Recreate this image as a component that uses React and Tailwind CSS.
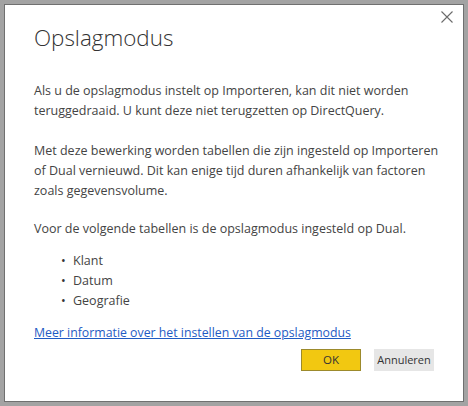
export default function App() {
  const body = { fontFamily: '"Open Sans", "Noto Sans", sans-serif' };

  return (
    <div className="w-[468px] h-[406px] bg-[#a3a3a3] p-[4px]">
      <div
        className="relative h-full border border-[#707070] bg-white pl-[29px] pr-[20px] pt-[17px] text-[#444444]"
        style={body}
      >
        {/* Close button */}
        <button className="absolute right-[10px] top-[6px] p-0 text-[#6b6b6b]" aria-label="Sluiten">
          <svg width="12" height="12" viewBox="0 0 12 12" fill="none" stroke="currentColor" strokeWidth="1.1">
            <path d="M0.5 0.5L11.5 11.5M11.5 0.5L0.5 11.5" />
          </svg>
        </button>

        <h1 className="text-[22.4px] leading-[32px] font-light text-[#333333]">Opslagmodus</h1>

        <p className="mt-[27px] text-[12.5px] leading-[20px] whitespace-nowrap">
          Als u de opslagmodus instelt op Importeren, kan dit niet worden
          <br />
          teruggedraaid. U kunt deze niet terugzetten op DirectQuery.
        </p>

        <p className="mt-[20px] text-[12.5px] leading-[20px] whitespace-nowrap">
          Met deze bewerking worden tabellen die zijn ingesteld op Importeren
          <br />
          of Dual vernieuwd. Dit kan enige tijd duren afhankelijk van factoren
          <br />
          zoals gegevensvolume.
        </p>

        <p className="mt-[18px] text-[12.5px] leading-[20px] whitespace-nowrap">
          Voor de volgende tabellen is de opslagmodus ingesteld op Dual.
        </p>

        <ul className="mt-[12px] text-[12.5px] leading-[20px]">
          {['Klant', 'Datum', 'Geografie'].map((t) => (
            <li key={t} className="flex items-center">
              <span className="w-[39px] pl-[27px] text-[#333333]">•</span>
              <span>{t}</span>
            </li>
          ))}
        </ul>

        <a href="#" className="mt-[12px] block w-fit text-[12.3px] leading-[20px] text-[#1f5bc4] underline">
          Meer informatie over het instellen van de opslagmodus
        </a>

        <div className="mt-[6px] flex justify-end gap-[13px] pr-[9px]">
          <button className="h-[22px] w-[60px] border border-[#9c8a2c] bg-[#f2c811] text-[11.5px] text-[#333333]">
            OK
          </button>
          <button className="h-[22px] w-[60px] bg-[#e6e6e6] text-[11px] text-[#333333]">
            Annuleren
          </button>
        </div>
      </div>
    </div>
  );
}
